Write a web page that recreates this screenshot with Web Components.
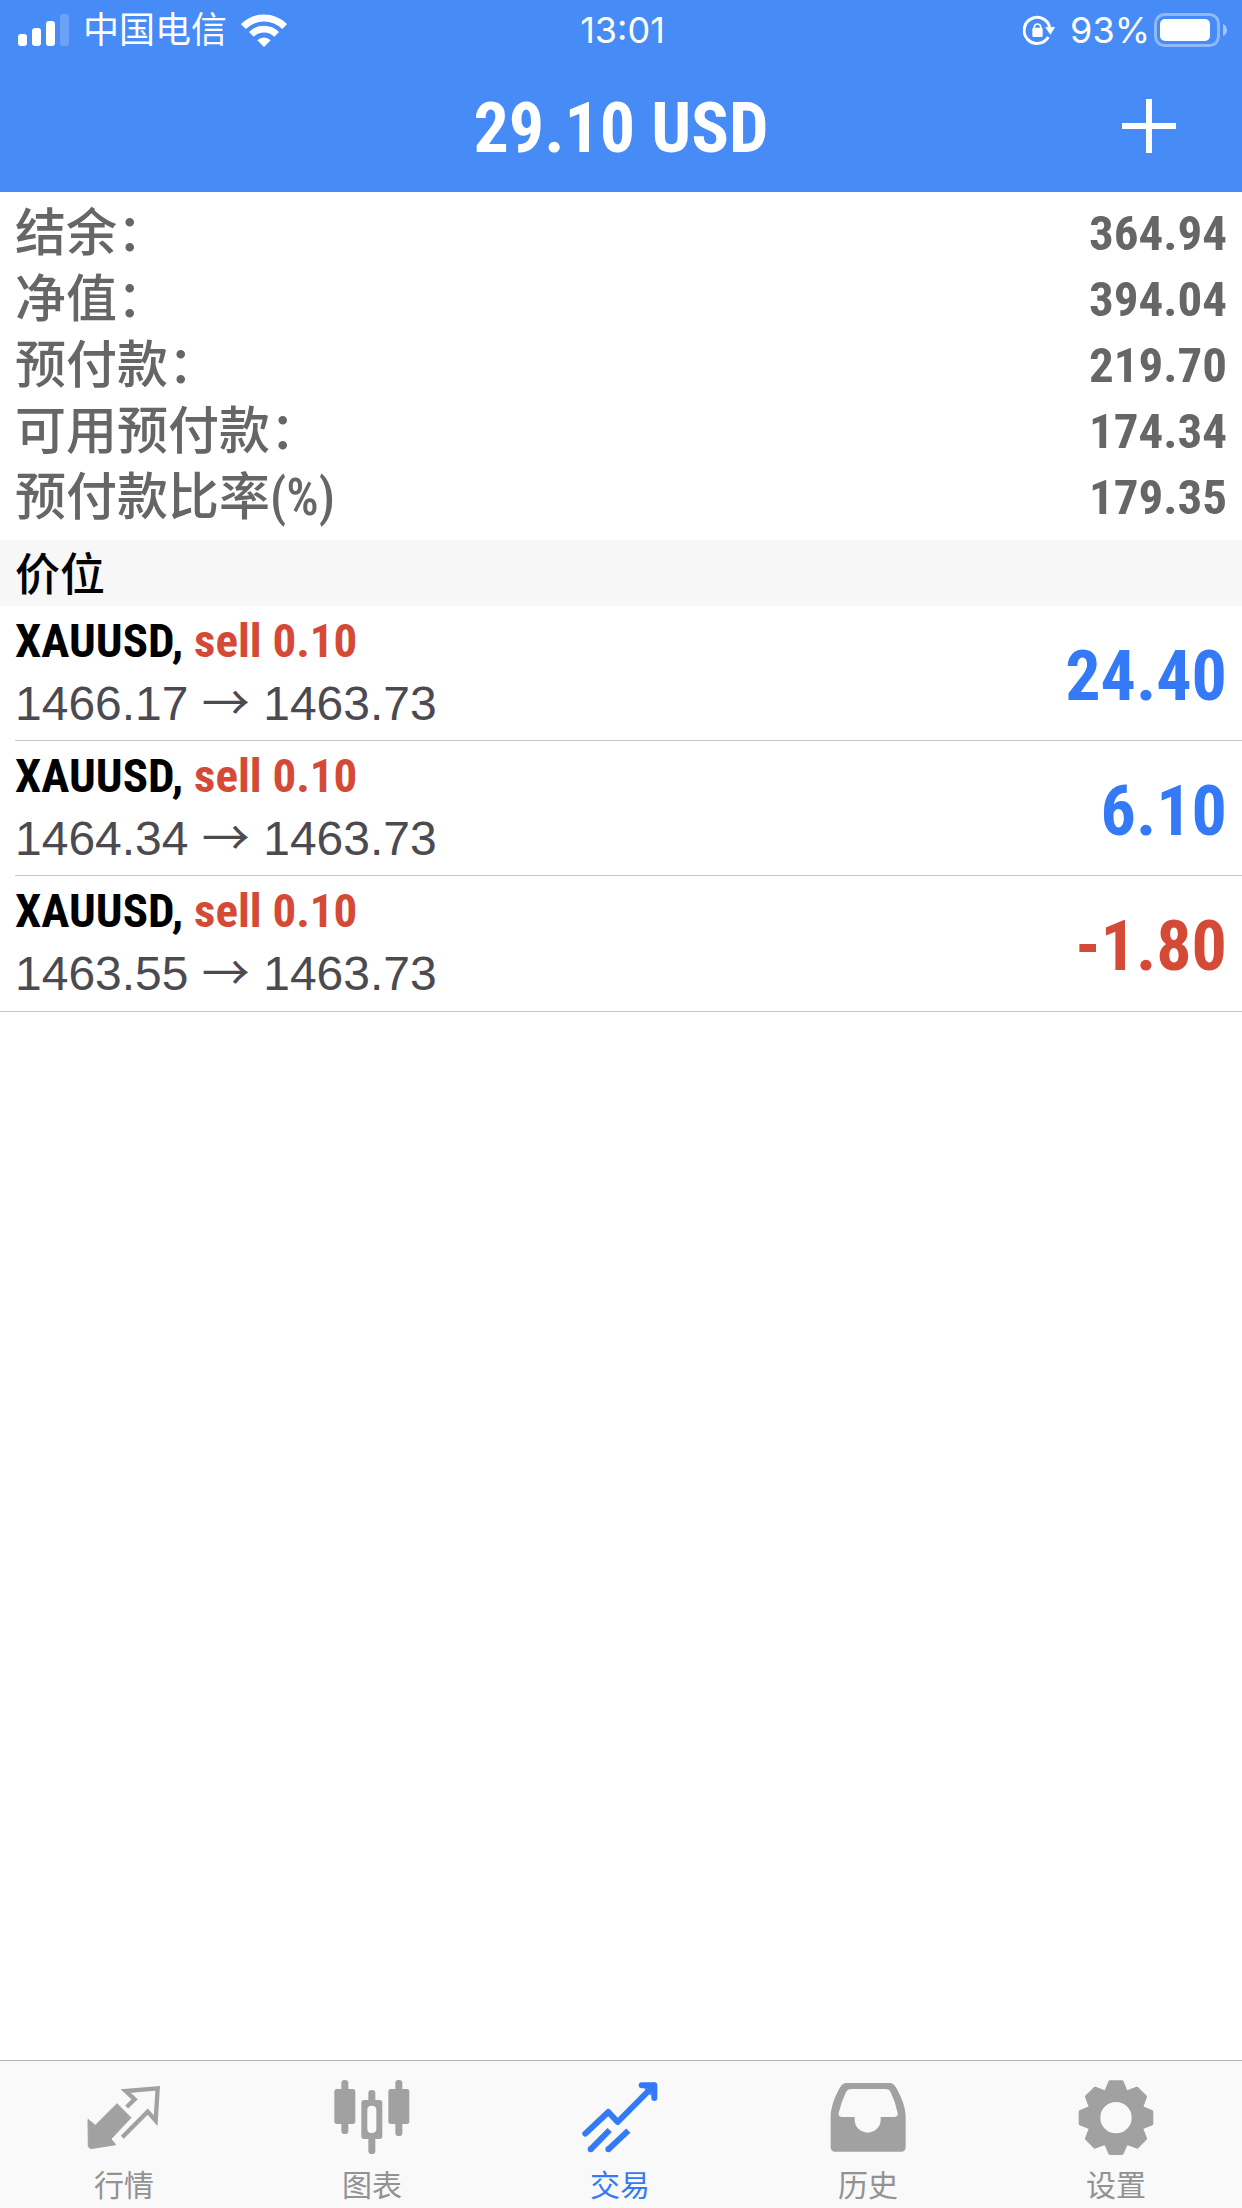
<!DOCTYPE html>
<html lang="zh-CN">
<head>
<meta charset="utf-8">
<meta name="viewport" content="width=device-width, initial-scale=1">
<title>29.10 USD</title>
<style>
    body {
        margin: 0;
        background: #fff;
        font-family: "Roboto Condensed", "Liberation Sans", "Noto Sans CJK SC", sans-serif;
    }
</style>
</head>
<body>
<trade-app>
    <status-bar slot="top" carrier="中国电信" time="13:01" battery="93%"></status-bar>
    <title-bar slot="top">29.10 USD</title-bar>

    <account-summary>
        <summary-row label="结余：">364.94</summary-row>
        <summary-row label="净值：">394.04</summary-row>
        <summary-row label="预付款：">219.70</summary-row>
        <summary-row label="可用预付款：">174.34</summary-row>
        <summary-row label="预付款比率(%)">179.35</summary-row>
    </account-summary>

    <position-list heading="价位">
        <position-row symbol="XAUUSD" side="sell 0.10" open="1466.17" current="1463.73" profit="24.40"></position-row>
        <position-row symbol="XAUUSD" side="sell 0.10" open="1464.34" current="1463.73" profit="6.10"></position-row>
        <position-row symbol="XAUUSD" side="sell 0.10" open="1463.55" current="1463.73" profit="-1.80"></position-row>
    </position-list>

    <tab-bar slot="bottom">
        <tab-item icon="quotes" href="#quotes">行情</tab-item>
        <tab-item icon="chart" href="#chart">图表</tab-item>
        <tab-item icon="trade" href="#trade" active>交易</tab-item>
        <tab-item icon="history" href="#history">历史</tab-item>
        <tab-item icon="settings" href="#settings">设置</tab-item>
    </tab-bar>
</trade-app>

<script>
const tabIcons = {
    quotes: `<svg viewBox="0 0 228 228">
        <path d="M6 121 L28 139 L93 74 L135 116 L75 180 L89 197 L14 209 L7 203 Z" fill="currentColor" stroke="currentColor" stroke-width="3" stroke-linejoin="round"/>
        <path d="M122 84 L146 61 L119 36 L215 28 L209 125 L185 98 L109 175" fill="none" stroke="currentColor" stroke-width="13"/>
    </svg>`,
    chart: `<svg viewBox="0 0 228 228" fill="currentColor">
        <rect x="22" y="3" width="21" height="162" rx="10"/>
        <rect x="1" y="30" width="63" height="105" rx="8"/>
        <rect x="184" y="3" width="21" height="168" rx="10"/>
        <rect x="163" y="30" width="63" height="105" rx="8"/>
        <rect x="103" y="33" width="21" height="40" rx="10"/>
        <rect x="103" y="170" width="21" height="55" rx="10"/>
        <path fill-rule="evenodd" d="M90 63 H137 Q145 63 145 71 V172 Q145 180 137 180 H90 Q82 180 82 172 V71 Q82 63 90 63 Z M113 80 Q100 80 100 92 V150 Q100 162 113 162 Q127 162 127 150 V92 Q127 80 113 80 Z"/>
    </svg>`,
    trade: `<svg viewBox="0 0 228 228" fill="none" stroke="currentColor" stroke-width="18">
        <path d="M10 164 L79 99 L107 129 L216 19" stroke-linecap="round" stroke-linejoin="round"/>
        <path d="M179 19 H217 V57" stroke-linecap="round" stroke-linejoin="round"/>
        <path d="M26 211 L83 153 M79 211 L139 155"/>
        <path d="M26 211 h0 M79 211 h0" stroke-linecap="round"/>
        <path d="M186 28 H208 V50 Z" fill="currentColor" stroke="none"/>
    </svg>`,
    history: `<svg viewBox="0 0 228 228" fill="currentColor">
        <path fill-rule="evenodd" d="M2 113 C2 82 18 45 31 24 Q38 12 50 12 H179 Q190 12 197 24 C210 45 227 82 227 113 V203 Q227 218 213 218 H16 Q2 218 2 203 Z
            M65 30 Q53 30 48 40 Q34 68 26 102 Q24 114 37 114 H74 V122 A39 39 0 0 0 152 122 V114 H192 Q205 114 203 102 Q196 68 182 40 Q178 30 165 30 Z"/>
    </svg>`,
    settings: `<svg viewBox="-114 -116 228 228" fill="currentColor" stroke="currentColor" stroke-width="10" stroke-linejoin="round">
        <path fill-rule="evenodd" d="M-18 -107 L18 -107 L31 -76 L63 -88 L88 -63 L76 -31 L107 -18 L107 18 L76 31 L88 63 L63 88 L31 76 L18 107 L-18 107 L-31 76 L-63 88 L-88 63 L-76 31 L-107 18 L-107 -18 L-76 -31 L-88 -63 L-63 -88 L-31 -76 Z
            M52 0 A52 52 0 1 0 -52 0 A52 52 0 1 0 52 0 Z"/>
    </svg>`
};

class TradeApp extends HTMLElement {
    constructor() {
        super();
        this.attachShadow({mode: 'open'});
        this.shadowRoot.innerHTML = `
    <style>
        :host {
            display: flex;
            flex-direction: column;
            min-height: 100vh;
        }
        header {
            background: #478bf6;
            color: #fff;
        }
        main {
            flex: 1;
        }
        footer {
            position: sticky;
            bottom: 0;
        }
    </style>
    <header><slot name="top"></slot></header>
    <main><slot></slot></main>
    <footer><slot name="bottom"></slot></footer>
    `;
    }
}

class StatusBar extends HTMLElement {
    constructor() {
        super();
        this.attachShadow({mode: 'open'});
    }

    connectedCallback() {
        this.shadowRoot.innerHTML = `
    <style>
        :host {
            display: grid;
            grid-template-columns: 1fr auto 1fr;
            align-items: center;
            height: 60px;
            padding: 0 15px 0 18px;
            font: 36px/60px Inter, "Noto Sans CJK SC", sans-serif;
        }
        div {
            display: flex;
            align-items: center;
        }
        .left {
            gap: 14px;
        }
        .right {
            justify-content: flex-end;
            gap: 4px;
        }
        .lock {
            margin-right: 10px;
        }
        svg {
            display: block;
        }
    </style>
    <div class="left">
        <svg width="51" height="34" viewBox="0 0 51 34" fill="#fff">
            <rect x="0" y="21" width="9" height="12" rx="3"/>
            <rect x="14" y="15" width="9" height="18" rx="3"/>
            <rect x="28" y="8" width="9" height="25" rx="3"/>
            <rect x="42" y="1" width="9" height="32" rx="3" opacity=".2"/>
        </svg>
        <span>${this.getAttribute('carrier')}</span>
        <svg width="46" height="33" viewBox="0 0 138 99" fill="none" stroke="#fff">
            <path d="M7 38 A87 87 0 0 1 131 38" stroke-width="21"/>
            <path d="M31 61 A54 54 0 0 1 107 61" stroke-width="20"/>
            <path d="M69 99 L49 79 A28 28 0 0 1 89 79 Z" fill="#fff" stroke="none"/>
        </svg>
    </div>
    <span>${this.getAttribute('time')}</span>
    <div class="right">
        <svg class="lock" width="33" height="30" viewBox="0 0 99 90" fill="none" stroke="#fff">
            <path d="M80 36 A39 39 0 1 0 76 66" stroke-width="9"/>
            <path d="M68 37 H95 L82 58 Z" fill="#fff" stroke="#fff" stroke-width="2" stroke-linejoin="round"/>
            <rect x="28" y="38" width="31" height="28" rx="4" fill="#fff" stroke="none"/>
            <path d="M34 40 V34 A10 10 0 0 1 53 34 V40" stroke-width="5"/>
        </svg>
        <span>${this.getAttribute('battery')}</span>
        <svg width="73" height="34" viewBox="0 0 73 34">
            <rect x="1.5" y="1.5" width="63" height="31" rx="9" fill="none" stroke="#fff" stroke-width="3" opacity=".4"/>
            <rect x="6" y="6" width="50" height="22" rx="5" fill="#fff"/>
            <path d="M69 11 Q73 13 73 17 Q73 21 69 23 Z" fill="#fff" opacity=".5"/>
        </svg>
    </div>
    `;
    }
}

class TitleBar extends HTMLElement {
    constructor() {
        super();
        this.attachShadow({mode: 'open'});
        this.shadowRoot.innerHTML = `
    <style>
        :host {
            display: grid;
            grid-template-columns: 1fr auto 1fr;
            align-items: center;
            height: 132px;
            padding: 0 60px;
        }
        h1 {
            grid-column: 2;
            margin: 0;
            padding-top: 4px;
            font-size: 70px;
            line-height: 128px;
            font-weight: bold;
        }
        button {
            justify-self: end;
            padding: 6px;
            border: none;
            background: none;
            color: inherit;
            cursor: pointer;
        }
        svg {
            display: block;
        }
    </style>
    <h1><slot></slot></h1>
    <button type="button" aria-label="新订单">
        <svg width="54" height="54" viewBox="0 0 54 54" fill="currentColor">
            <rect x="24" y="0" width="6" height="54"/>
            <rect x="0" y="24" width="54" height="6"/>
        </svg>
    </button>
    `;
    }
}

class AccountSummary extends HTMLElement {
    constructor() {
        super();
        this.attachShadow({mode: 'open'});
        this.shadowRoot.innerHTML = `
    <style>
        :host {
            display: block;
            padding: 9px 15px;
            color: #666;
        }
    </style>
    <slot></slot>
    `;
    }
}

class SummaryRow extends HTMLElement {
    constructor() {
        super();
        this.attachShadow({mode: 'open'});
    }

    connectedCallback() {
        this.shadowRoot.innerHTML = `
    <style>
        :host {
            display: block;
        }
        dl {
            display: flex;
            justify-content: space-between;
            margin: 0;
            font-size: 51px;
            line-height: 66px;
        }
        dt {
            font-weight: 500;
        }
        dd {
            margin: 0;
            font-size: 49px;
            font-weight: bold;
        }
    </style>
    <dl><dt>${this.getAttribute('label')}</dt><dd><slot></slot></dd></dl>
    `;
    }
}

class PositionList extends HTMLElement {
    constructor() {
        super();
        this.attachShadow({mode: 'open'});
    }

    connectedCallback() {
        this.shadowRoot.innerHTML = `
    <style>
        :host {
            display: block;
            padding-bottom: 1px;
            border-bottom: 1px solid #c8c7cc;
        }
        h2 {
            margin: 0;
            padding: 6px 15px 0;
            background: #f7f7f7;
            font-size: 45px;
            line-height: 60px;
            font-weight: 500;
        }
        ::slotted(position-row:not(:last-child)) {
            border-bottom: 1px solid #c8c7cc;
        }
        ::slotted(position-row) {
            margin-left: 15px;
        }
    </style>
    <h2>${this.getAttribute('heading')}</h2>
    <slot></slot>
    `;
    }
}

class PositionRow extends HTMLElement {
    constructor() {
        super();
        this.attachShadow({mode: 'open'});
    }

    connectedCallback() {
        const profit = this.getAttribute('profit');
        const tone = profit.startsWith('-') ? 'loss' : 'gain';

        this.shadowRoot.innerHTML = `
    <style>
        :host {
            display: flex;
            justify-content: space-between;
            align-items: center;
            padding: 3px 15px 5px 0;
        }
        p {
            margin: 0;
            font-size: 48px;
            line-height: 63px;
        }
        .name {
            font-size: 47px;
            font-weight: bold;
        }
        .side, .loss {
            color: #d54a36;
        }
        .prices {
            color: #4b4a50;
            font-family: "Liberation Sans", sans-serif;
        }
        .arrow {
            font-family: "Noto Sans CJK SC", sans-serif;
            line-height: 1;
        }
        .profit {
            padding-top: 8px;
            font-size: 70px;
            line-height: 72px;
            font-weight: bold;
        }
        .gain {
            color: #347af6;
        }
    </style>
    <div>
        <p class="name">${this.getAttribute('symbol')}, <span class="side">${this.getAttribute('side')}</span></p>
        <p class="prices">${this.getAttribute('open')} <span class="arrow">→</span> ${this.getAttribute('current')}</p>
    </div>
    <span class="profit ${tone}">${profit}</span>
    `;
    }
}

class TabBar extends HTMLElement {
    constructor() {
        super();
        this.attachShadow({mode: 'open'});
        this.shadowRoot.innerHTML = `
    <style>
        :host {
            display: block;
            border-top: 1px solid #b2b2b2;
            background: #f9f9f9;
        }
        nav {
            display: grid;
            grid-template-columns: repeat(5, 1fr);
            padding-right: 2px;
        }
    </style>
    <nav><slot></slot></nav>
    `;
    }
}

class TabItem extends HTMLElement {
    constructor() {
        super();
        this.attachShadow({mode: 'open'});
    }

    connectedCallback() {
        this.shadowRoot.innerHTML = `
    <style>
        :host {
            display: block;
            --icon: #a1a1a1;
            --label: #929292;
        }
        :host([active]) {
            --icon: #347af6;
            --label: #347af6;
        }
        a {
            display: flex;
            flex-direction: column;
            align-items: center;
            gap: 12px;
            padding: 18px 0 3px;
            color: var(--label);
            font-size: 30px;
            line-height: 38px;
            text-decoration: none;
        }
        svg {
            display: block;
            width: 76px;
            height: 76px;
            color: var(--icon);
        }
    </style>
    <a href="${this.getAttribute('href')}">
        ${tabIcons[this.getAttribute('icon')]}
        <span><slot></slot></span>
    </a>
    `;
    }
}

customElements.define('trade-app', TradeApp);
customElements.define('status-bar', StatusBar);
customElements.define('title-bar', TitleBar);
customElements.define('account-summary', AccountSummary);
customElements.define('summary-row', SummaryRow);
customElements.define('position-list', PositionList);
customElements.define('position-row', PositionRow);
customElements.define('tab-bar', TabBar);
customElements.define('tab-item', TabItem);
</script>
</body>
</html>
